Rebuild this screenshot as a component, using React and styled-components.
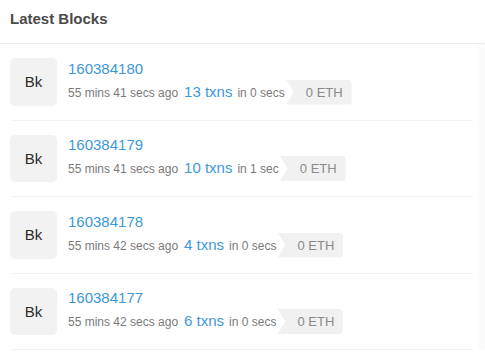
import React from "react";
import styled, { createGlobalStyle } from "styled-components";

const Global = createGlobalStyle`
  html, body { margin: 0; padding: 0; background: #ffffff; }
  body { font-family: "Liberation Sans", Arial, sans-serif; }
`;

const Card = styled.section`
  width: 485px;
  background: linear-gradient(to right, #ffffff 478px, #fbfbfb 478px);
`;

const Header = styled.header`
  height: 44px;
  box-sizing: border-box;
  padding: 9px 10px 0;
  border-bottom: 1px solid #eeeeee;
  background: #ffffff;
`;

const Title = styled.h2`
  margin: 0;
  font-size: 15px;
  line-height: 19px;
  font-weight: 700;
  color: #4a4a4a;
`;

const List = styled.ul`
  list-style: none;
  margin: 0;
  padding: 0 12px 0 10px;
`;

const Row = styled.li`
  display: flex;
  align-items: flex-start;
  gap: 11px;
  padding: 14px 0 15px;
  background: linear-gradient(#f1f1f1, #f1f1f1) no-repeat left 2px bottom / calc(100% - 2px) 1px;
`;

const Avatar = styled.div`
  width: 47px;
  height: 47.5px;
  flex: none;
  border-radius: 5px;
  background: #f2f2f2;
  display: flex;
  align-items: center;
  justify-content: center;
  font-size: 15px;
  color: #2b2b2b;
`;

const Info = styled.div`
  display: flex;
  flex-direction: column;
  gap: 2px;
  padding-top: 1.5px;
`;

const BlockLink = styled.a`
  font-size: 15px;
  line-height: 18px;
  color: #3d98da;
  text-decoration: none;
`;

const Meta = styled.div`
  display: flex;
  align-items: baseline;
  white-space: nowrap;
`;

const Muted = styled.span`
  font-size: 12px;
  color: #7a7a7a;
  margin-right: ${(p) => p.$gap || 0}px;
`;

const Txns = styled.a`
  font-size: 15px;
  color: #3d98da;
  text-decoration: none;
  margin-right: 5px;
`;

const Reward = styled.span`
  display: inline-block;
  height: 25px;
  line-height: 25px;
  margin-left: 1px;
  padding: 0 9px 0 20px;
  font-size: 13px;
  color: #8a8a8a;
  background: #f1f1f1;
  border-radius: 0 4px 4px 0;
  clip-path: polygon(0 0, 100% 0, 100% 100%, 0 100%, 8px 50%);
`;

const blocks = [
  { num: "160384180", ago: "55 mins 41 secs ago", txns: "13 txns", dur: "in 0 secs" },
  { num: "160384179", ago: "55 mins 41 secs ago", txns: "10 txns", dur: "in 1 sec" },
  { num: "160384178", ago: "55 mins 42 secs ago", txns: "4 txns", dur: "in 0 secs" },
  { num: "160384177", ago: "55 mins 42 secs ago", txns: "6 txns", dur: "in 0 secs" },
];

export default function App() {
  return (
    <>
      <Global />
      <Card>
        <Header>
          <Title>Latest Blocks</Title>
        </Header>
        <List>
          {blocks.map((b) => (
            <Row key={b.num}>
              <Avatar>Bk</Avatar>
              <Info>
                <BlockLink href="#">{b.num}</BlockLink>
                <Meta>
                  <Muted $gap={6}>{b.ago}</Muted>
                  <Txns href="#">{b.txns}</Txns>
                  <Muted>{b.dur}</Muted>
                  <Reward>0 ETH</Reward>
                </Meta>
              </Info>
            </Row>
          ))}
        </List>
      </Card>
    </>
  );
}
